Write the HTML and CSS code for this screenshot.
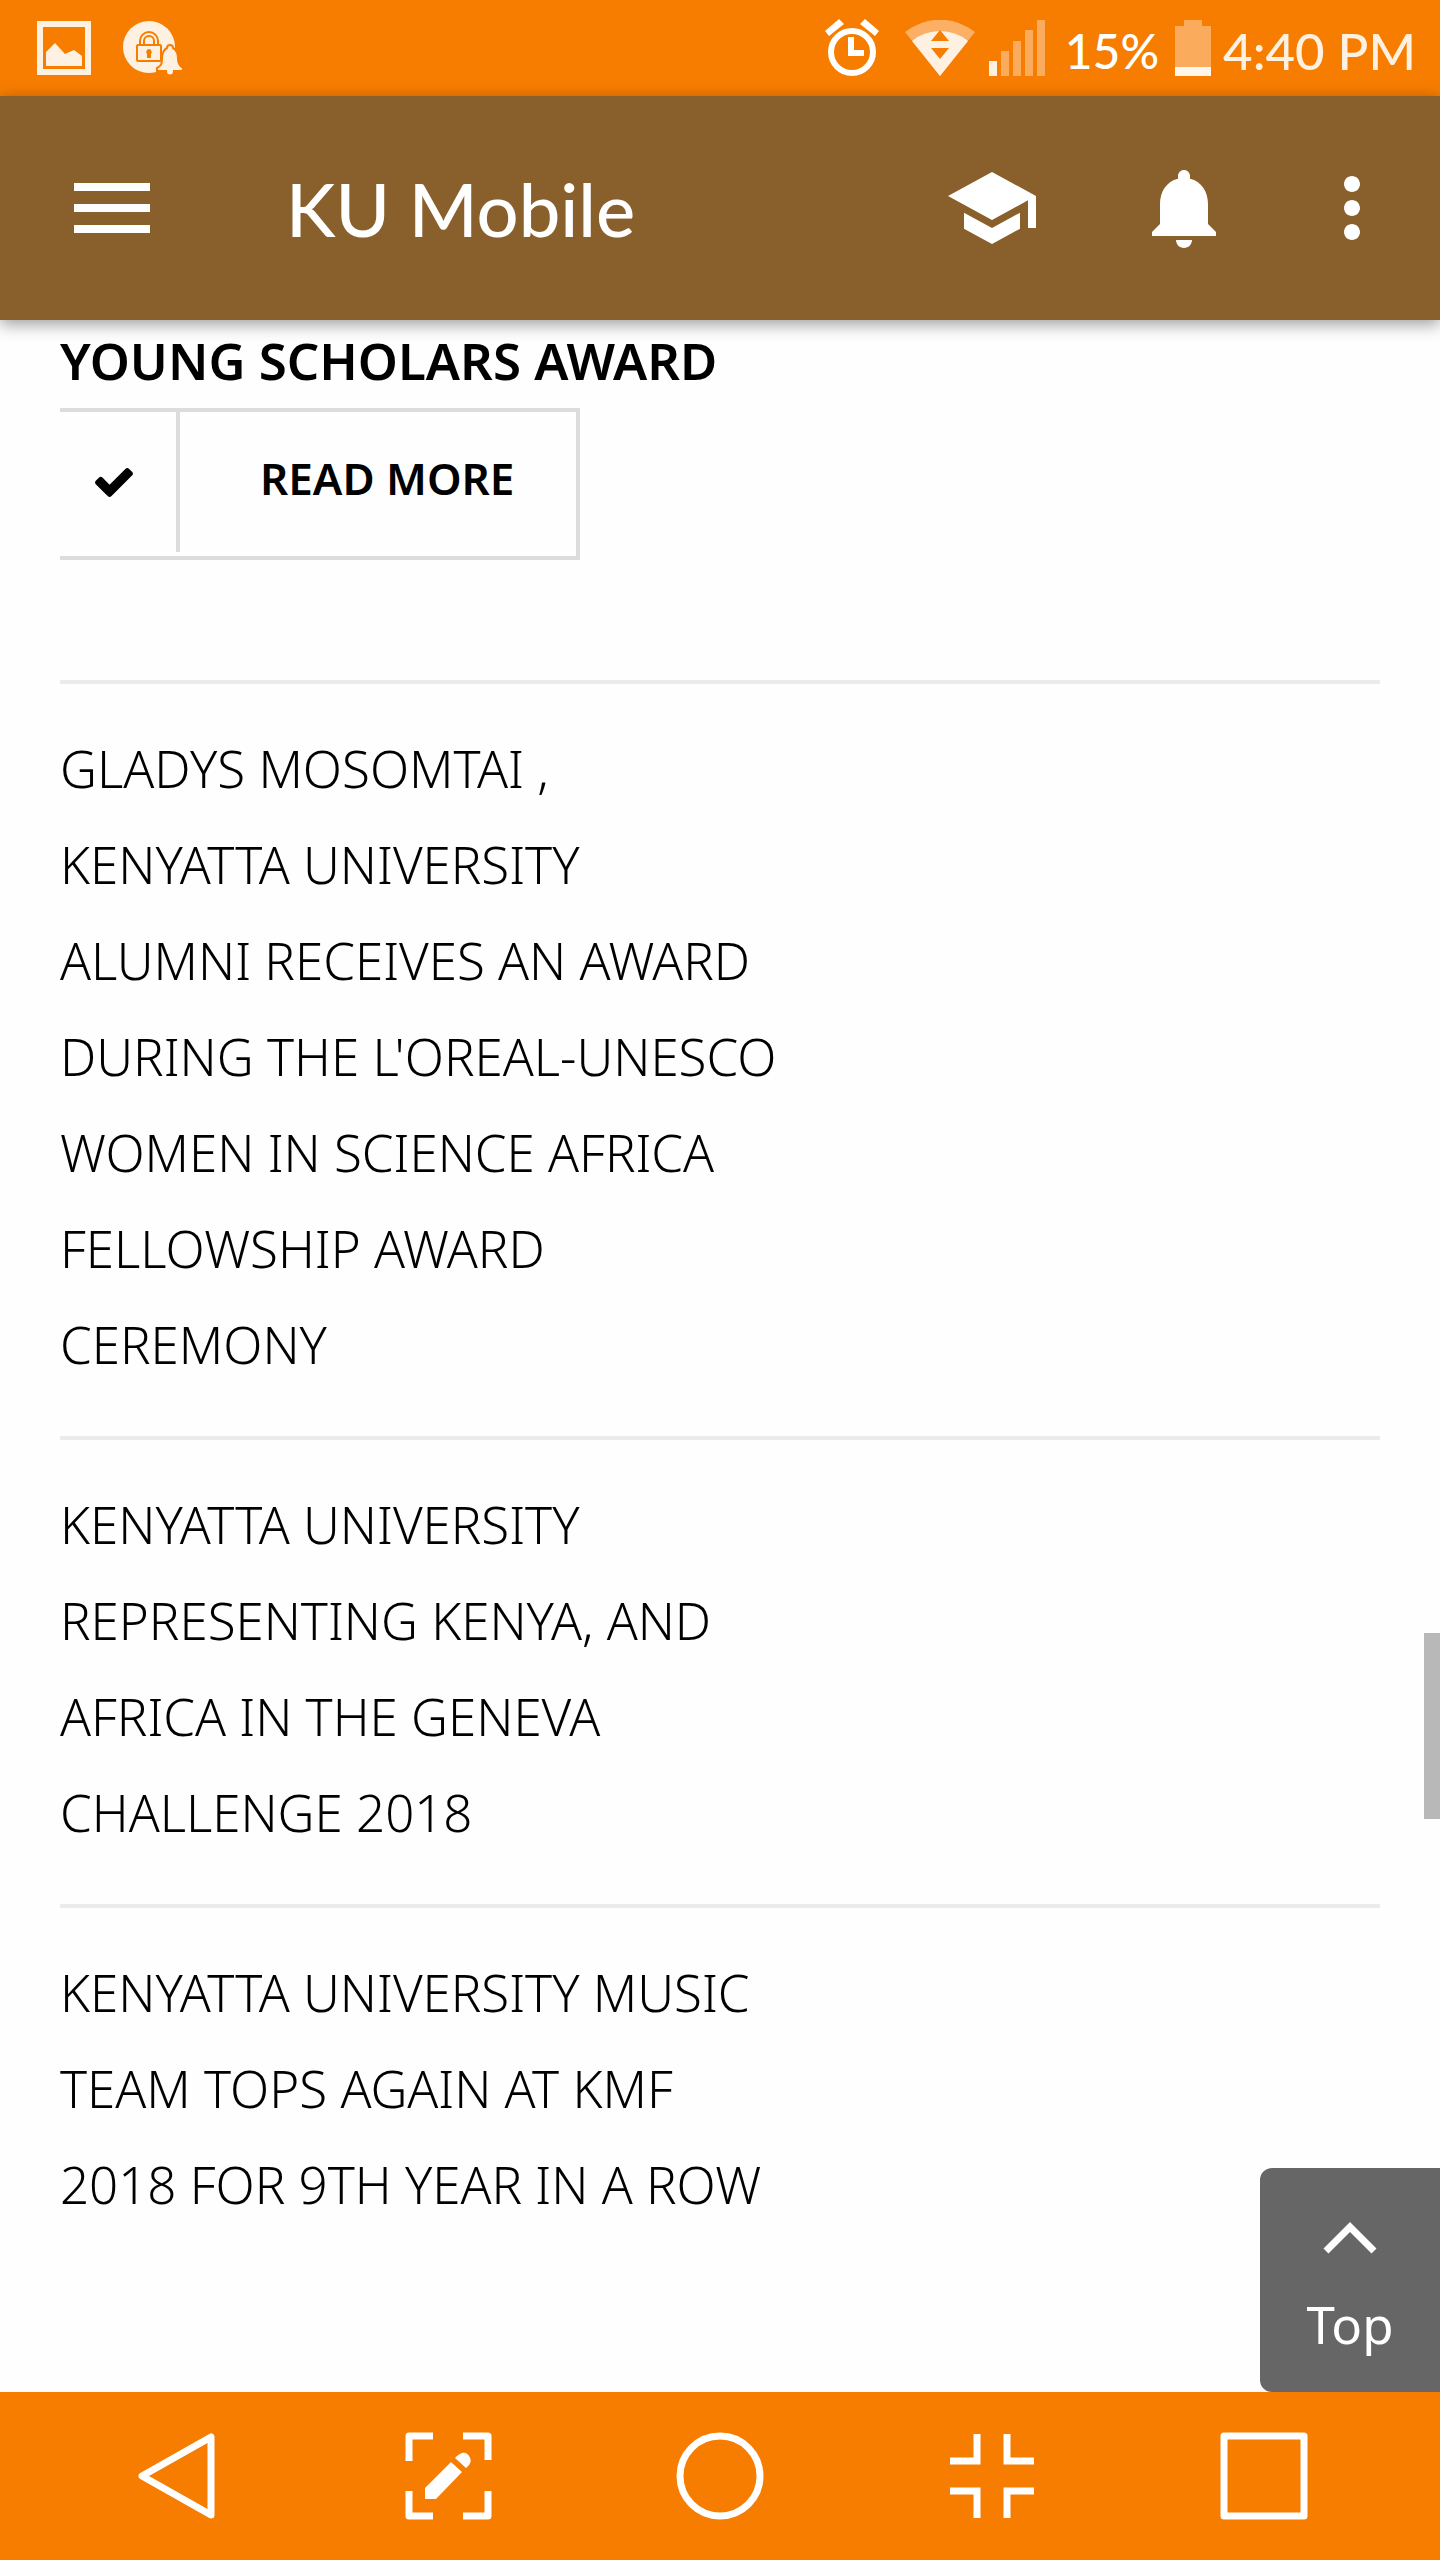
FILE: index.html
```html
<!DOCTYPE html>
<html lang="en">

<head>
    <meta charset="UTF-8">
    <meta name="viewport" content="width=device-width, initial-scale=1.0">
    <link rel="stylesheet" href="styles.css">
    <title>KU Mobile</title>
</head>

<body>
    <div class="status-bar">
        <svg class="status-image" width="54" height="54" viewBox="0 0 54 54">
            <rect x="3" y="3" width="48" height="48" fill="none" stroke="#fff1e2" stroke-width="6" />
            <path d="M9 45V31l9-9 10 11 9-4 8 6v10z" fill="#fff1e2" />
        </svg>
        <svg width="62" height="56" viewBox="0 0 62 56">
            <circle cx="27" cy="27" r="26" fill="#fff1e2" />
            <g fill="none" stroke="#f77d00" stroke-width="2">
                <rect x="15" y="25" width="24" height="16" rx="1" />
                <path d="M18 25v-4a9 9 0 0 1 18 0v4M22 25v-4a5 5 0 0 1 10 0v4" />
            </g>
            <path d="M27 29a3 3 0 0 1 2 5v4h-4v-4a3 3 0 0 1 2-5z" fill="#f77d00" />
            <path d="M48 25c2 0 3 1 3 3 4 2 5 6 5 11 0 5 2 7 5 9v3h-9c0 6-8 6-8 0h-9v-3c4-2 5-4 5-9 0-5 1-9 5-11 0-2 1-3 3-3z" fill="#fff1e2" stroke="#f77d00" stroke-width="2" />
        </svg>
        <div class="status-right">
            <svg class="alarm" width="56" height="58" viewBox="0 0 56 58">
                <circle cx="28" cy="33" r="21" fill="none" stroke="#fff" stroke-width="6" />
                <path d="M24 18h6v13h10v6H24zM1 12L15 0l5 5L5 17zM55 12L41 0l-5 5 15 12z" fill="#fff" />
            </svg>
            <svg class="wifi" width="70" height="56" viewBox="0 0 70 56">
                <path d="M0 12a56 56 0 0 1 70 0L35 56z" fill="#fbb066" />
                <path d="M7 21a44 44 0 0 1 56 0L35 56z" fill="#fff1e2" />
                <path d="M35 10l9 11H26zM26 28h18l-9 11z" fill="#f77d00" />
            </svg>
            <svg class="signal" width="56" height="56" viewBox="0 0 56 56">
                <path d="M0 41h8v15H0z" fill="#fff1e2" />
                <path d="M12 31h8v25h-8zM24 21h8v35h-8zM36 10h8v46h-8zM48 0h8v56h-8z" fill="#fbab5c" />
            </svg>
            <span class="percent">15%</span>
            <svg class="battery" width="36" height="56" viewBox="0 0 36 56">
                <path d="M9 0h18v6h9v41H0V6h9z" fill="#fbab5c" />
                <path d="M0 47h36v9H0z" fill="#fff6ec" />
            </svg>
            <span class="time">4:40 PM</span>
        </div>
    </div>

    <header class="app-bar">
        <button class="menu" aria-label="Menu">
            <svg width="76" height="50" viewBox="0 0 76 50">
                <path d="M0 0h76v8H0zM0 21h76v8H0zM0 42h76v8H0z" fill="#fff" />
            </svg>
        </button>
        <h1 class="app-title">KU Mobile</h1>
        <button class="school" aria-label="School">
            <svg width="96" height="96" viewBox="0 0 24 24">
                <path d="M5 13.18v4L12 21l7-3.82v-4L12 17l-7-3.82zM12 3L1 9l11 6 9-4.91V17h2V9L12 3z" fill="#fff" />
            </svg>
        </button>
        <button class="bell" aria-label="Notifications">
            <svg width="96" height="96" viewBox="0 0 24 24">
                <path d="M12 22c1.1 0 2-.9 2-2h-4c0 1.1.89 2 2 2zm6-6v-5c0-3.07-1.64-5.64-4.5-6.32V4c0-.83-.67-1.5-1.5-1.5s-1.5.67-1.5 1.5v.68C7.63 5.36 6 7.92 6 11v5l-2 2v1h16v-1l-2-2z" fill="#fff" />
            </svg>
        </button>
        <button aria-label="More options">
            <svg width="96" height="96" viewBox="0 0 24 24">
                <path d="M12 8c1.1 0 2-.9 2-2s-.9-2-2-2-2 .9-2 2 .9 2 2 2zm0 2c-1.1 0-2 .9-2 2s.9 2 2 2 2-.9 2-2-.9-2-2-2zm0 6c-1.1 0-2 .9-2 2s.9 2 2 2 2-.9 2-2-.9-2-2-2z" fill="#fff" />
            </svg>
        </button>
    </header>

    <main class="content">
        <h2 class="award">YOUNG SCHOLARS AWARD</h2>
        <a href="#" class="read-more">
            <span class="check">
                <svg width="38" height="29" viewBox="121 334 1550 1188">
                    <path d="M1671 566q0 40-28 68l-724 724-136 136q-28 28-68 28t-68-28l-136-136-362-362q-28-28-28-68t28-68l136-136q28-28 68-28t68 28l294 295 656-657q28-28 68-28t68 28l136 136q28 28 28 68z" />
                </svg>
            </span>
            <span class="read-text">READ MORE</span>
        </a>
        <div class="news">
            <a href="#" class="news-item">GLADYS MOSOMTAI ,<br>KENYATTA UNIVERSITY<br>ALUMNI RECEIVES AN AWARD<br>DURING THE L'OREAL-UNESCO<br>WOMEN IN SCIENCE AFRICA<br>FELLOWSHIP AWARD<br>CEREMONY</a>
            <a href="#" class="news-item">KENYATTA UNIVERSITY<br>REPRESENTING KENYA, AND<br>AFRICA IN THE GENEVA<br>CHALLENGE 2018</a>
            <a href="#" class="news-item">KENYATTA UNIVERSITY MUSIC<br>TEAM TOPS AGAIN AT KMF<br>2018 FOR 9TH YEAR IN A ROW</a>
        </div>
        <div class="scroll-thumb"></div>
        <button class="top">
            <svg width="54" height="32" viewBox="0 0 54 32">
                <path d="M3 29L27 5l24 24" fill="none" stroke="#fff" stroke-width="7" />
            </svg>
            <span>Top</span>
        </button>
    </main>

    <nav class="nav-bar">
        <button aria-label="Back">
            <svg width="88" height="88" viewBox="0 0 88 88">
                <path d="M79 5v78L10 44z" fill="none" stroke="#fff" stroke-width="7" stroke-linejoin="round" />
            </svg>
        </button>
        <button aria-label="Capture">
            <svg width="88" height="88" viewBox="0 0 88 88">
                <path d="M29 4H5v25M59 4h25v24M5 59v25h24M84 59v25H59" fill="none" stroke="#fff" stroke-width="7" stroke-linejoin="round" />
                <path d="M47 30l11 10-26 27H21V56zM51 26c8-8 12-5 14-2 3 4 2 8-3 12z" fill="#fff" />
            </svg>
        </button>
        <button aria-label="Home">
            <svg width="88" height="88" viewBox="0 0 88 88">
                <circle cx="44" cy="44" r="40" fill="none" stroke="#fff" stroke-width="7" />
            </svg>
        </button>
        <button aria-label="Shrink">
            <svg width="88" height="88" viewBox="0 0 88 88">
                <path d="M29 2v27H2M59 2v27h27M2 59h27v27M86 59H59v27" fill="none" stroke="#fff" stroke-width="7" />
            </svg>
        </button>
        <button aria-label="Recent apps">
            <svg width="88" height="88" viewBox="0 0 88 88">
                <rect x="4" y="4" width="80" height="80" fill="none" stroke="#fff" stroke-width="7" stroke-linejoin="round" />
            </svg>
        </button>
    </nav>
</body>

</html>
```

FILE: styles.css
```css
* {
    box-sizing: border-box;
}

body {
    display: flex;
    flex-direction: column;
    margin: 0;
    min-height: 100vh;
    background-color: #fefefe;
    font-family: "Noto Sans", "Open Sans", sans-serif;
    color: #000;
}

a {
    color: #000;
    text-decoration: none;
}

button {
    padding: 0;
    border: 0;
    background: none;
    font-family: inherit;
    cursor: pointer;
}

svg {
    display: block;
}

/* status bar */
.status-bar {
    display: flex;
    align-items: center;
    height: 96px;
    padding: 0 24px 0 37px;
    background-color: #f77d00;
    font-family: Lato, sans-serif;
    font-weight: 500;
    color: #fff;
}

.status-image {
    margin-right: 31px;
}

.status-right {
    display: flex;
    align-items: center;
    margin-left: auto;
}

.alarm {
    margin-right: 25px;
}

.wifi {
    margin-right: 14px;
}

.signal {
    margin-right: 20px;
}

.percent {
    padding-top: 4px;
    font-size: 48px;
}

.battery {
    margin: 0 12px 0 16px;
}

.time {
    padding-top: 4px;
    font-size: 51px;
    color: #fff1e2;
}

/* app bar */
.app-bar {
    position: relative;
    z-index: 1;
    display: flex;
    align-items: center;
    height: 224px;
    padding: 0 40px 0 74px;
    background-color: #89602b;
    box-shadow: 0 4px 16px rgba(0, 0, 0, .4);
}

.app-title {
    flex: 1;
    margin: 0 0 0 136px;
    font-family: Lato, sans-serif;
    font-size: 74px;
    font-weight: 500;
    color: #fff;
}

.school {
    margin-right: 96px;
}

.bell {
    margin-right: 72px;
}

/* page */
.content {
    position: relative;
    flex: 1;
    padding: 0 60px 40px;
}

.award {
    margin: 0;
    padding-bottom: 8px;
    font-size: 51px;
    line-height: 80px;
    font-weight: 600;
}

.read-more {
    display: inline-flex;
    vertical-align: top;
    padding-bottom: 4px;
    border: 4px solid #dcdcdc;
    border-left: 0;
    font-size: 44px;
    line-height: 132px;
    font-weight: 600;
}

.check {
    display: flex;
    align-items: center;
    padding: 0 43px 0 35px;
    border-right: 4px solid #dcdcdc;
}

.read-text {
    padding: 0 62px 8px 80px;
}

.news {
    margin-top: 120px;
}

.news-item {
    display: block;
    padding: 36px 0 44px;
    border-top: 4px solid #ebebeb;
    font-size: 51px;
    line-height: 96px;
    font-weight: 300;
}

.scroll-thumb {
    position: absolute;
    top: 1313px;
    right: 0;
    width: 16px;
    height: 186px;
    background-color: #b8b8b8;
}

.top {
    position: absolute;
    right: 0;
    bottom: 0;
    display: flex;
    flex-direction: column;
    align-items: center;
    gap: 34px;
    width: 180px;
    padding: 54px 0 32px;
    border-radius: 12px 0 0 12px;
    background-color: #666;
    font-size: 51px;
    line-height: 72px;
    color: #fff;
}

/* navigation bar */
.nav-bar {
    display: flex;
    align-items: center;
    height: 168px;
    padding: 0 40px;
    background-color: #f77d00;
}

.nav-bar button {
    flex: 1;
    display: flex;
    justify-content: center;
}
```
